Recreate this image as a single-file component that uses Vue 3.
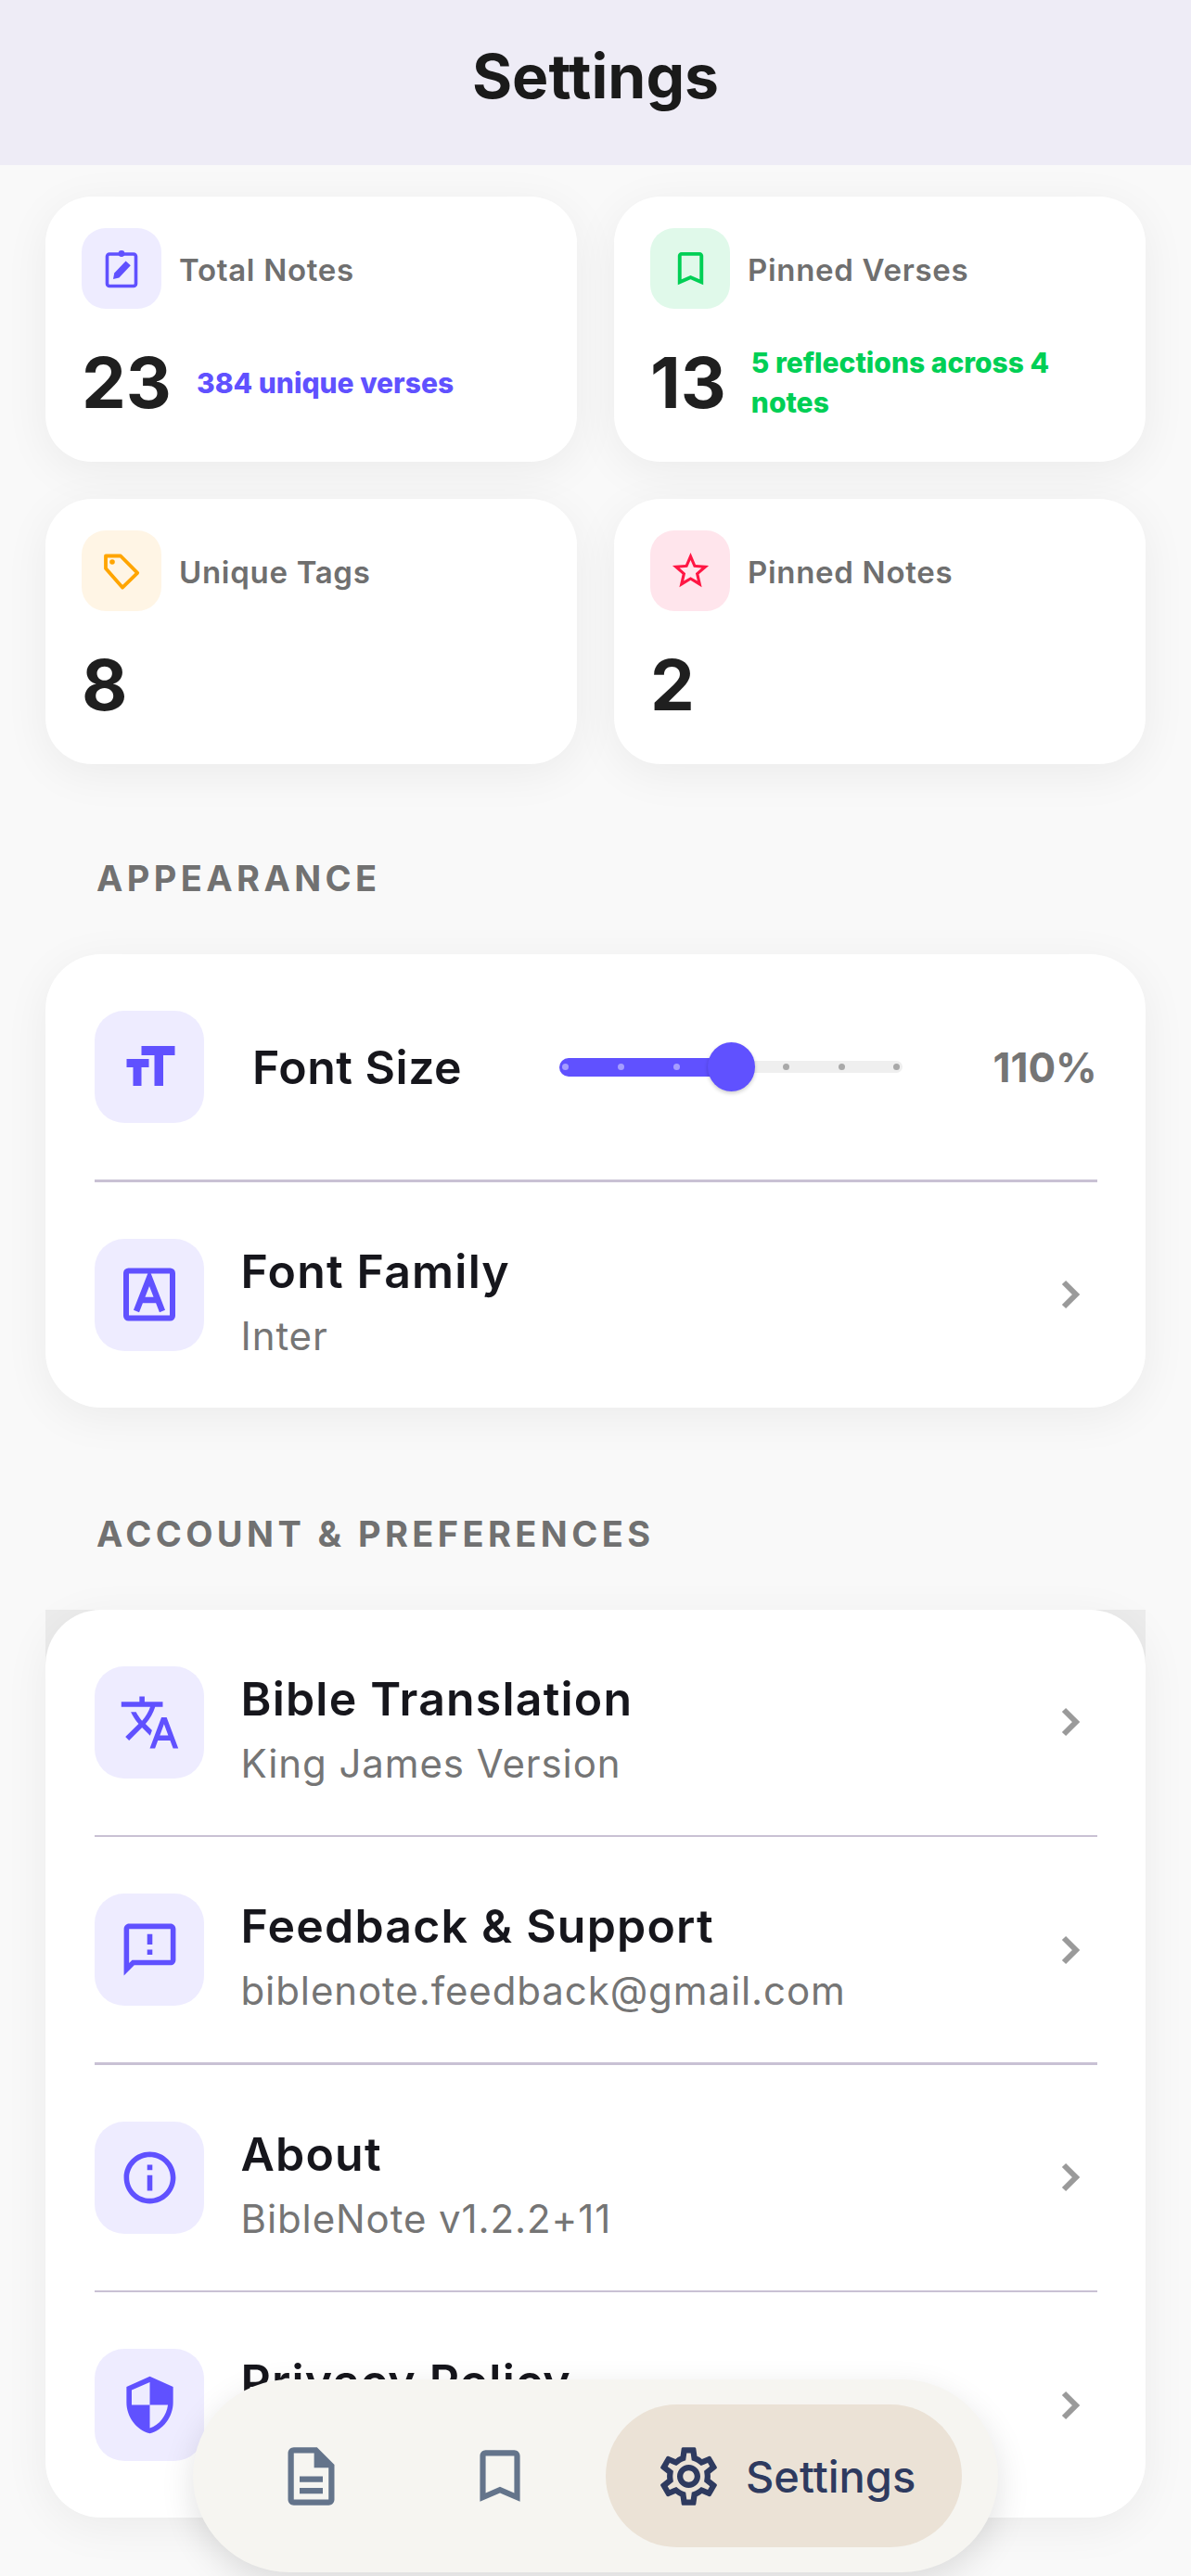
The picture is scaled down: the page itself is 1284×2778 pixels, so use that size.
<template>
  <div class="page">
    <header class="top-bar">
      <h1 class="top-title">Settings</h1>
    </header>

    <main class="content">
      <section class="stats">
        <div v-for="stat in stats" :key="stat.label" class="stat-card">
          <div class="stat-head">
            <div class="stat-icon" :class="stat.tone">
              <svg v-if="stat.kind === 'clipboard'" width="48" height="48" viewBox="0 0 48 48">
                <rect x="8.5" y="8" width="31" height="34.5" rx="2.5" fill="none" stroke="currentColor" stroke-width="3.6" />
                <circle cx="24" cy="7.5" r="3.4" fill="currentColor" />
                <path d="M15 35l1.2-6.4L28.6 15.4l5.2 4.8-12.4 13.2z" fill="currentColor" />
              </svg>
              <svg v-else-if="stat.kind === 'tag'" width="48" height="48" viewBox="0 0 48 48">
                <path d="M7 7.5h16l18.2 18.4L25 41.6 7 21z" fill="none" stroke="currentColor" stroke-width="3.8" stroke-linejoin="round" />
                <circle cx="14" cy="14" r="2.8" fill="currentColor" />
              </svg>
              <svg v-else-if="stat.kind === 'bookmark'" width="47" height="47" viewBox="0 0 24 24">
                <path fill="currentColor" :d="icons.bookmark" />
              </svg>
              <svg v-else width="47" height="47" viewBox="0 0 24 24">
                <path fill="currentColor" :d="icons.star" />
              </svg>
            </div>
            <span class="stat-label">{{ stat.label }}</span>
          </div>
          <div class="stat-body">
            <span class="stat-value">{{ stat.value }}</span>
            <span v-if="stat.note" class="stat-note" :class="stat.tone">{{ stat.note }}</span>
          </div>
        </div>
      </section>

      <h2 class="section-label first">APPEARANCE</h2>
      <section class="card">
        <div class="row">
          <div class="row-icon">
            <svg width="60" height="60" viewBox="0 0 60 60">
              <rect x="21.5" y="7" width="36" height="10" fill="currentColor" />
              <rect x="35.5" y="7" width="9.5" height="43" fill="currentColor" />
              <rect x="5.5" y="21" width="24" height="9" fill="currentColor" />
              <rect x="12.5" y="21" width="9" height="29" fill="currentColor" />
            </svg>
          </div>
          <span class="size-label">Font Size</span>
          <div class="slider">
            <div class="slider-track"></div>
            <div class="slider-fill"></div>
            <span
              v-for="(dot, i) in dots"
              :key="i"
              class="slider-dot"
              :class="{ on: i < 3 }"
              :style="{ left: dot + 'px' }"
            ></span>
            <div class="slider-thumb"></div>
          </div>
          <span class="size-value">110%</span>
        </div>
        <div class="divider"></div>
        <div class="row">
          <div class="row-icon">
            <svg width="60" height="60" viewBox="0 0 60 60" fill="none" stroke="currentColor">
              <rect x="5" y="4.5" width="50" height="51" rx="2.5" stroke-width="6" />
              <path d="M16 48L30 12l14 36M21 36h18" stroke-width="6.5" />
            </svg>
          </div>
          <div class="row-text">
            <span class="row-title">Font Family</span>
            <span class="row-sub">Inter</span>
          </div>
          <svg class="chevron" width="24" height="36" viewBox="0 0 24 36">
            <path d="M4 5l13 13L4 31" fill="none" stroke="currentColor" stroke-width="6" />
          </svg>
        </div>
      </section>

      <h2 class="section-label">ACCOUNT &amp; PREFERENCES</h2>
      <div class="card-back">
        <section class="card">
          <template v-for="(item, i) in accountRows" :key="item.title">
            <div v-if="i > 0" class="divider"></div>
            <div class="row">
              <div class="row-icon">
                <svg width="67" height="67" viewBox="0 0 24 24">
                  <path fill="currentColor" fill-rule="evenodd" :d="item.icon" />
                </svg>
              </div>
              <div class="row-text">
                <span class="row-title">{{ item.title }}</span>
                <span v-if="item.sub" class="row-sub">{{ item.sub }}</span>
              </div>
              <svg class="chevron" width="24" height="36" viewBox="0 0 24 36">
                <path d="M4 5l13 13L4 31" fill="none" stroke="currentColor" stroke-width="6" />
              </svg>
            </div>
          </template>
        </section>
      </div>
    </main>

    <nav class="bottom-nav">
      <div class="nav-item">
        <svg width="75" height="75" viewBox="0 0 24 24">
          <path fill="currentColor" :d="icons.doc" />
        </svg>
      </div>
      <div class="nav-item mark">
        <svg width="74" height="74" viewBox="0 0 24 24">
          <path fill="currentColor" :d="icons.bookmark" />
        </svg>
      </div>
      <div class="nav-active">
        <svg width="75" height="75" viewBox="0 0 24 24">
          <path fill="currentColor" :d="icons.gear" />
        </svg>
        <span class="nav-label">Settings</span>
      </div>
    </nav>
  </div>
</template>

<script setup>
const icons = {
  bookmark: 'M17 3H7c-1.1 0-1.99.9-1.99 2L5 21l7-3 7 3V5c0-1.1-.9-2-2-2zm0 15l-5-2.18L7 18V5h10v13z',
  star: 'M22 9.24l-7.19-.62L12 2 9.19 8.63 2 9.24l5.46 4.73L5.82 21 12 17.27 18.18 21l-1.63-7.03L22 9.24zM12 15.4l-3.76 2.27 1-4.28-3.32-2.88 4.38-.38L12 6.1l1.71 4.04 4.38.38-3.32 2.88 1 4.28L12 15.4z',
  doc: 'M8 16h8v2H8zm0-4h8v2H8zm6-10H6c-1.1 0-2 .9-2 2v16c0 1.1.89 2 1.99 2H18c1.1 0 2-.9 2-2V8l-6-6zm4 18H6V4h7v5h5v11z',
  gear: 'M19.43 12.98c.04-.32.07-.64.07-.98 0-.34-.03-.66-.07-.98l2.11-1.65c.19-.15.24-.42.12-.64l-2-3.46c-.09-.16-.26-.25-.44-.25-.06 0-.12.01-.17.03l-2.49 1c-.52-.4-1.08-.73-1.69-.98l-.38-2.65C14.46 2.18 14.25 2 14 2h-4c-.25 0-.46.18-.49.42l-.38 2.65c-.61.25-1.17.59-1.69.98l-2.49-1c-.06-.02-.12-.03-.18-.03-.17 0-.34.09-.43.25l-2 3.46c-.13.22-.07.49.12.64l2.11 1.65c-.04.32-.07.65-.07.98 0 .33.03.66.07.98l-2.11 1.65c-.19.15-.24.42-.12.64l2 3.46c.09.16.26.25.44.25.06 0 .12-.01.17-.03l2.49-1c.52.4 1.08.73 1.69.98l.38 2.65c.03.24.24.42.49.42h4c.25 0 .46-.18.49-.42l.38-2.65c.61-.25 1.17-.59 1.69-.98l2.49 1c.06.02.12.03.18.03.17 0 .34-.09.43-.25l2-3.46c.12-.22.07-.49-.12-.64l-2.11-1.65zm-1.98-1.71c.04.31.05.52.05.73 0 .21-.02.43-.05.73l-.14 1.13.89.7 1.08.84-.7 1.21-1.27-.51-1.04-.42-.9.68c-.43.32-.84.56-1.25.73l-1.06.43-.16 1.13-.2 1.35h-1.4l-.19-1.35-.16-1.13-1.06-.43c-.43-.18-.83-.41-1.23-.71l-.91-.7-1.06.43-1.27.51-.7-1.21 1.08-.84.89-.7-.14-1.13c-.03-.31-.05-.54-.05-.74s.02-.43.05-.73l.14-1.13-.89-.7-1.08-.84.7-1.21 1.27.51 1.04.42.9-.68c.43-.32.84-.56 1.25-.73l1.06-.43.16-1.13.2-1.35h1.39l.19 1.35.16 1.13 1.06.43c.43.18.83.41 1.23.71l.91.7 1.06-.43 1.27-.51.7 1.21-1.07.85-.89.7.14 1.13zM12 8c-2.21 0-4 1.79-4 4s1.79 4 4 4 4-1.79 4-4-1.79-4-4-4zm0 6c-1.1 0-2-.9-2-2s.9-2 2-2 2 .9 2 2-.9 2-2 2z'
}

const stats = [
  { label: 'Total Notes', value: 23, note: '384 unique verses', tone: 'violet', kind: 'clipboard' },
  { label: 'Pinned Verses', value: 13, note: '5 reflections across 4 notes', tone: 'green', kind: 'bookmark' },
  { label: 'Unique Tags', value: 8, tone: 'amber', kind: 'tag' },
  { label: 'Pinned Notes', value: 2, tone: 'rose', kind: 'star' }
]

const dots = [6.5, 66, 126, 244.5, 304.5, 363.5]

const accountRows = [
  {
    title: 'Bible Translation',
    sub: 'King James Version',
    icon: 'M12.87 15.07l-2.54-2.51.03-.03c1.74-1.94 2.98-4.17 3.71-6.53H17V4h-7V2H8v2H1v1.99h11.17C11.5 7.92 10.44 9.75 9 11.35 8.07 10.32 7.3 9.19 6.69 8h-2c.73 1.63 1.73 3.17 2.98 4.56l-5.09 5.02L4 19l5-5 3.11 3.11.76-2.04zM18.5 10h-2L12 22h2l1.12-3h4.75L21 22h2l-4.5-12zm-2.62 7l1.62-4.33L19.12 17h-3.24z'
  },
  {
    title: 'Feedback & Support',
    sub: 'biblenote.feedback@gmail.com',
    icon: 'M20 2H4c-1.1 0-1.99.9-1.99 2L2 22l4-4h14c1.1 0 2-.9 2-2V4c0-1.1-.9-2-2-2zm0 14H5.17L4 17.17V4h16v12zM11 12h2v2h-2zm0-6h2v4h-2z'
  },
  {
    title: 'About',
    sub: 'BibleNote v1.2.2+11',
    icon: 'M11 7h2v2h-2zm0 4h2v6h-2zm1-9C6.48 2 2 6.48 2 12s4.48 10 10 10 10-4.48 10-10S17.52 2 12 2zm0 18c-4.41 0-8-3.59-8-8s3.59-8 8-8 8 3.59 8 8-3.59 8-8 8z'
  },
  {
    title: 'Privacy Policy',
    icon: 'M12 1L3 5v6c0 5.55 3.84 10.74 9 12 5.16-1.26 9-6.45 9-12V5l-9-4zm0 10.99h7c-.53 4.12-3.28 7.79-7 8.94V12H5V6.3l7-3.11v8.8z'
  }
]
</script>

<style>
html,
body {
  background: #f9f9f9;
}
</style>

<style scoped>
.page {
  position: relative;
  height: 2778px;
  overflow: hidden;
  background: #f9f9f9;
  font-family: Inter, "Liberation Sans", sans-serif;
}

.top-bar {
  height: 178px;
  background: #eeecf6;
  display: flex;
  justify-content: center;
  padding-top: 38px;
  box-sizing: border-box;
}

.top-title {
  margin: 0;
  font-size: 66px;
  line-height: 88px;
  font-weight: 700;
  color: #1a1a1a;
}

.content {
  padding: 34px 49px 0;
}

.stats {
  display: grid;
  grid-template-columns: 573px 573px;
  gap: 40px;
}

.stat-card {
  height: 286px;
  box-sizing: border-box;
  padding: 34px 39px;
  background: #fff;
  border-radius: 50px;
  box-shadow: 0 10px 50px rgba(0, 0, 0, 0.06);
}

.stat-head {
  display: flex;
  align-items: center;
  gap: 19px;
}

.stat-icon {
  width: 86px;
  height: 87px;
  border-radius: 26px;
  display: flex;
  align-items: center;
  justify-content: center;
}

.stat-label {
  margin-top: 2px;
  font-size: 33px;
  letter-spacing: 0.7px;
  font-weight: 600;
  color: #6f6f6f;
}

.stat-body {
  margin-top: 39px;
  display: flex;
  align-items: center;
  gap: 27px;
  height: 80px;
}

.stat-value {
  font-size: 76px;
  line-height: 80px;
  font-weight: 700;
  color: #1f1f1f;
}

.stat-note {
  margin-top: 2px;
  font-size: 30px;
  line-height: 43px;
  font-weight: 800;
  background: none !important;
}

.violet {
  color: #6051ff;
  background: #eeecff;
}

.green {
  color: #00cf55;
  background: #e0f9ea;
}

.amber {
  color: #ffa500;
  background: #fff5e5;
}

.rose {
  color: #ff1744;
  background: #ffe5ec;
}

.section-label {
  margin: 114px 0 60px 55px;
  font-size: 38px;
  line-height: 44px;
  font-weight: 700;
  letter-spacing: 4.4px;
  color: #717171;
}

.section-label.first {
  margin-top: 101px;
}

.card-back {
  background: linear-gradient(#ececec, #ececec) top / 100% 62px no-repeat;
}

.card {
  background: #fff;
  border-radius: 60px;
  box-shadow: 0 10px 50px rgba(0, 0, 0, 0.06);
}

.row {
  display: flex;
  align-items: center;
  padding: 61px 52px 61px 53px;
}

.row-icon {
  flex: none;
  width: 118px;
  height: 121px;
  border-radius: 32px;
  background: #eeecff;
  color: #6051ff;
  display: flex;
  align-items: center;
  justify-content: center;
}

.row-text {
  flex: 1;
  height: 121px;
  margin-left: 39.5px;
  display: flex;
  flex-direction: column;
}

.row-title {
  font-size: 50px;
  line-height: 70px;
  font-weight: 600;
  color: #16161c;
  letter-spacing: 1.2px;
}

.row-sub {
  font-size: 42px;
  line-height: 70px;
  color: #757575;
  letter-spacing: 0.9px;
}

.chevron {
  flex: none;
  color: #9a9a9a;
  margin-right: 16px;
}

.divider {
  height: 2.5px;
  margin: 0 52px 0 53px;
  background: #c9c1d4;
}

.size-label {
  flex: 1;
  margin-left: 52px;
  font-size: 50px;
  line-height: 70px;
  font-weight: 600;
  color: #16161c;
  letter-spacing: 0.5px;
}

.slider {
  position: relative;
  flex: none;
  width: 370px;
  height: 53px;
}

.slider-track {
  position: absolute;
  left: 0;
  right: 0;
  top: 20px;
  height: 13px;
  border-radius: 7px;
  background: #efefef;
}

.slider-fill {
  position: absolute;
  left: 0;
  top: 16.5px;
  width: 186px;
  height: 20px;
  border-radius: 10px;
  background: #6051ff;
}

.slider-dot {
  position: absolute;
  top: 23px;
  width: 7px;
  height: 7px;
  margin-left: -3.5px;
  border-radius: 50%;
  background: #a9a9a9;
}

.slider-dot.on {
  background: #a59dff;
}

.slider-thumb {
  position: absolute;
  left: 160px;
  top: 0;
  width: 51px;
  height: 53px;
  border-radius: 50%;
  background: #6051ff;
  box-shadow: 0 2px 4px rgba(0, 0, 0, 0.2);
}

.size-value {
  flex: none;
  width: 110px;
  margin-left: 97.5px;
  margin-right: 2.5px;
  text-align: right;
  font-size: 44px;
  font-weight: 700;
  white-space: nowrap;
  color: #757575;
}

.bottom-nav {
  position: absolute;
  left: 208px;
  top: 2566px;
  width: 868px;
  height: 208px;
  box-sizing: border-box;
  padding: 27px 39px 27px 90px;
  border-radius: 104px;
  background: #f6f5f1;
  box-shadow: 0 12px 36px rgba(0, 0, 0, 0.12);
  display: flex;
  align-items: center;
}

.nav-item {
  color: #64748b;
  display: flex;
}

.mark {
  margin-left: 129px;
}

.nav-active {
  margin-left: auto;
  width: 384px;
  height: 154px;
  box-sizing: border-box;
  padding-left: 52px;
  border-radius: 77px;
  background: #ebe2d6;
  color: #2e3a5f;
  display: flex;
  align-items: center;
  gap: 24px;
}

.nav-label {
  font-size: 47px;
  font-weight: 500;
}
</style>
